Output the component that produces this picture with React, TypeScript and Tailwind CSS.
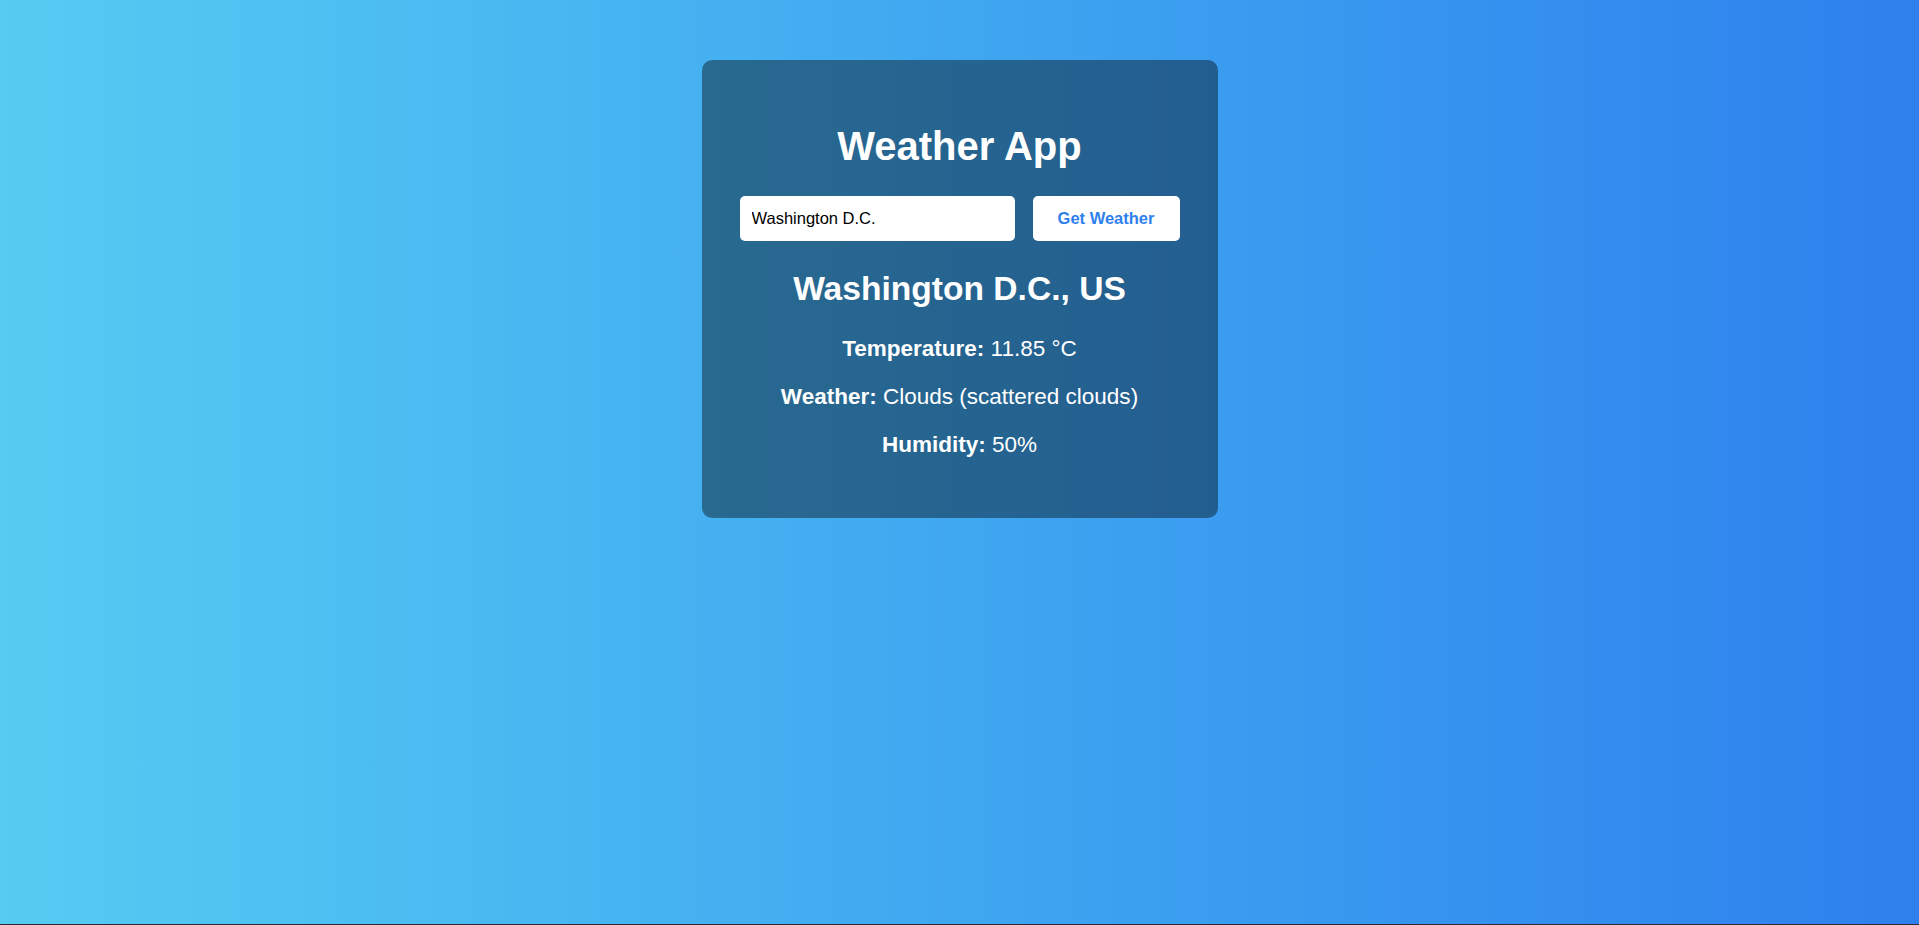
import { useState } from 'react';

interface WeatherInfo {
  city: string;
  country: string;
  temp: number;
  main: string;
  description: string;
  humidity: number;
}

export default function App(): JSX.Element {
  const [query, setQuery] = useState('Washington D.C.');
  const [weather] = useState<WeatherInfo>({
    city: 'Washington D.C.',
    country: 'US',
    temp: 11.85,
    main: 'Clouds',
    description: 'scattered clouds',
    humidity: 50,
  });

  return (
    <div className="flex h-[925px] flex-col bg-gradient-to-r from-[#56ccf2] to-[#2f80ed] font-['Liberation_Sans',Arial,sans-serif]">
      <div className="flex flex-1 justify-center pt-[60px]">
        <div className="flex h-[458px] w-[516px] flex-col items-center rounded-[10px] bg-black/40 px-[38px] pt-[62px] text-center text-white">
          <h1 className="text-[40px] font-bold leading-[48px]">Weather App</h1>

          <div className="mt-[26px] flex w-full gap-[18px]">
            <input
              value={query}
              onChange={e => setQuery(e.target.value)}
              className="h-[45px] w-[275px] rounded-[5px] bg-white px-[12px] text-[16.5px] text-black outline-none"
            />
            <button className="h-[45px] flex-1 rounded-[5px] bg-white text-[16.5px] font-bold text-[#2f80ed]">
              Get Weather
            </button>
          </div>

          <h2 className="mt-[28px] text-[33.6px] font-bold leading-[40px]">
            {weather.city}, {weather.country}
          </h2>

          <div className="mt-[26px] flex flex-col gap-[20px] text-[22.5px] leading-[28px]">
            <p>
              <span className="font-bold">Temperature:</span> {weather.temp} °C
            </p>
            <p>
              <span className="font-bold">Weather:</span> {weather.main} ({weather.description})
            </p>
            <p>
              <span className="font-bold">Humidity:</span> {weather.humidity}%
            </p>
          </div>
        </div>
      </div>
      <div className="h-px bg-[#2b2b33]" />
    </div>
  );
}
